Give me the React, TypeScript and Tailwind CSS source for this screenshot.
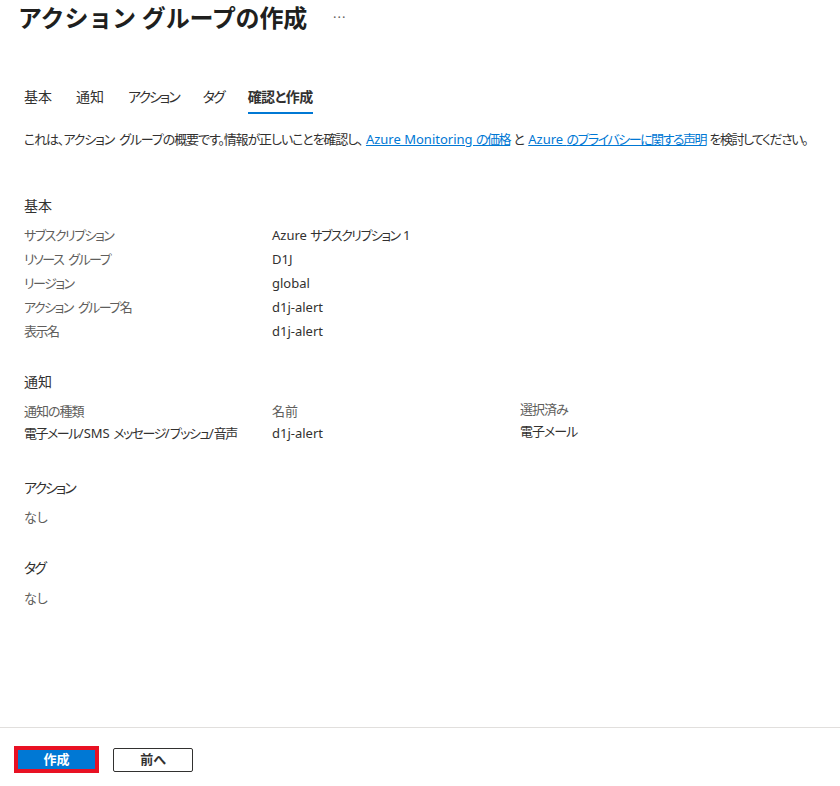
const font = "font-['Noto_Sans','Noto_Sans_CJK_JP',sans-serif] [font-feature-settings:'palt']";

// narrow CJK run (the original UI font has slim kana); spaces keep normal width
const J = ({ children, t = "tracking-[-1.5px]" }: { children: string; t?: string }) => {
  const words = children.split(" ");
  return (
    <>
      {words.map((w, i) => (
        <span key={i}>
          {i > 0 && <span className="inline-block w-[5px]" />}
          <span className={t}>{w}</span>
        </span>
      ))}
    </>
  );
};

const basics = [
  { label: "サブスクリプション", value: <>Azure <J>サブスクリプション</J> 1</> },
  { label: "リソース グループ", value: <>D1J</> },
  { label: "リージョン", value: <>global</> },
  { label: "アクション グループ名", value: <>d1j-alert</> },
  { label: "表示名", value: <>d1j-alert</> },
];

const tabs = [
  { t: "基本", cls: "" },
  { t: "通知", cls: "" },
  { t: "アクション", cls: "tracking-[-2px]" },
  { t: "タグ", cls: "tracking-[-2px]" },
  { t: "確認と作成", cls: "tracking-[-0.5px]" },
];

const SectionTitle = ({ children, className = "" }: { children: string; className?: string }) => (
  <h3 className={`text-[14px] leading-[20px] text-[#323130] ${className}`}>{children}</h3>
);

const App = () => {
  return (
    <div className={`${font} w-[840px] h-[786px] bg-white flex flex-col text-[#323130] overflow-hidden`}>
      <div className="flex-1 flex flex-col">
        {/* header */}
        <div className="flex items-center h-9 pl-[18px]">
          <h1 className="text-[24px] leading-9 font-bold text-[#201f1e] [font-feature-settings:normal] tracking-[-0.2px]">
            アクション グループの作成
          </h1>
          <span className="ml-[26px] text-[13px] text-[#605e5c] tracking-[1px]">···</span>
        </div>

        {/* tabs */}
        <div className="flex gap-[24px] pl-[24px] mt-[51px] text-[14px]">
          {tabs.map((tab, i) => {
            const active = i === tabs.length - 1;
            return (
              <div
                key={tab.t}
                className={`leading-[20px] pb-[5px] border-b-2 ${tab.cls} ${
                  active ? "border-[#0078d4] font-bold" : "border-transparent"
                }`}
              >
                {tab.t}
              </div>
            );
          })}
        </div>

        <div className="px-[24px]">
          <p className="mt-[15px] text-[13px] leading-[20px] whitespace-nowrap">
            <J t="tracking-[-1.1px]">これは、アクション グループの概要です。情報が正しいことを確認し、</J>{" "}
            <a className="text-[#0078d4] underline">
              Azure Monitoring <J t="tracking-[-1.5px]">の価格</J>
            </a>{" "}
            と{" "}
            <a className="text-[#0078d4] underline">
              Azure <J t="tracking-[-1.5px]">のプライバシーに関する声明</J>
            </a>{" "}
            <J t="tracking-[-1.5px]">を検討してください。</J>
          </p>

          {/* 基本 */}
          <SectionTitle className="mt-[47px]">基本</SectionTitle>
          <div className="mt-[7px] text-[13px] leading-[24px]">
            {basics.map((r) => (
              <div key={r.label} className="grid grid-cols-[248px_1fr]">
                <span className="text-[#605e5c]">
                  <J>{r.label}</J>
                </span>
                <span>{r.value}</span>
              </div>
            ))}
          </div>

          {/* 通知 */}
          <SectionTitle className="mt-[29px]">通知</SectionTitle>
          <div className="mt-[8px] grid grid-cols-[248px_248px_1fr] text-[13px] leading-[22px]">
            <span className="text-[#605e5c] tracking-[-1px]">通知の種類</span>
            <span className="text-[#605e5c]">名前</span>
            <span className="text-[#605e5c] tracking-[-1px] -translate-y-[2px]">選択済み</span>
            <span className="whitespace-nowrap">
              <J>電子メール</J>/SMS <J>メッセージ</J>/<J>プッシュ</J>/<J>音声</J>
            </span>
            <span>d1j-alert</span>
            <span className="tracking-[-1px] -translate-y-[2px]">電子メール</span>
          </div>

          {/* アクション */}
          <SectionTitle className="mt-[34px] tracking-[-2px]">アクション</SectionTitle>
          <div className="mt-[7px] text-[13px] leading-[24px] text-[#605e5c]">なし</div>

          {/* タグ */}
          <SectionTitle className="mt-[29px] tracking-[-2px]">タグ</SectionTitle>
          <div className="mt-[8px] text-[13px] leading-[24px] text-[#605e5c]">なし</div>
        </div>
      </div>

      {/* footer */}
      <div className="h-[59px] border-t border-[#e1dfdd] flex items-start pt-[18px] pl-[14px] gap-[14px]">
        <button className="w-[85px] h-[27px] border-[4px] border-[#e81123] p-0 flex">
          <span className="flex-1 bg-[#0078d4] text-white text-[13px] font-bold leading-[19px] flex items-center justify-center">
            作成
          </span>
        </button>
        <button className="mt-[2px] w-[80px] h-[24px] border border-[#323130] rounded-[2px] text-[13px] font-bold text-[#323130] flex items-center justify-center">
          前へ
        </button>
      </div>
    </div>
  );
};

export default App;
